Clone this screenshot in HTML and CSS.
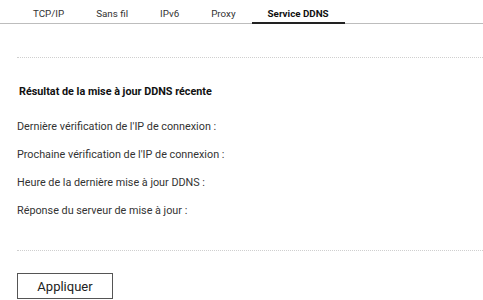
FILE: index.html
```html
<!DOCTYPE html>
<html>
<head>
<title>Service DDNS</title>
<meta charset="utf-8" />
<link rel="stylesheet" href="styles.css">
</head>

<body>

<ul class="tabs">
	<li class="tab">TCP/IP</li>
	<li class="tab">Sans fil</li>
	<li class="tab">IPv6</li>
	<li class="tab">Proxy</li>
	<li class="tab active">Service DDNS</li>
</ul>

<div class="panel">

	<h3 class="title">Résultat de la mise à jour DDNS récente</h3>

	<div class="row">Dernière vérification de l'IP de connexion :</div>
	<div class="row">Prochaine vérification de l'IP de connexion :</div>
	<div class="row">Heure de la dernière mise à jour DDNS :</div>
	<div class="row">Réponse du serveur de mise à jour :</div>

</div>

<p class="actions"><button type="button" class="btn">Appliquer</button></p>

</body>
</html>
```

FILE: styles.css
```css
body {
	margin: 0;
	background: #fff;
	color: #333;
	font: 10.8px Roboto, "Liberation Sans", sans-serif;
}

.tabs {
	display: flex;
	margin: 0;
	padding: 0 0 0 17px;
	list-style: none;
	border-bottom: 1px solid #bdbdbd;
}

.tab {
	padding: 8px 16px 3px;
	line-height: 11px;
	font-size: 9.8px;
	color: #333;
	border-bottom: 2px solid transparent;
	margin-bottom: -1px;
}

.tab.active {
	font-weight: bold;
	color: #111;
	border-bottom-color: #222;
}

.panel {
	margin: 33px 0 0 17px;
	padding: 27px 0 32px;
	border-top: 1px dotted #cfcfcf;
	border-bottom: 1px dotted #cfcfcf;
}

.title {
	margin: 0 0 21px 2px;
	font-size: 10.8px;
	line-height: 14px;
	font-weight: bold;
	color: #111;
}

.row {
	line-height: 14px;
	margin-bottom: 14px;
	color: #333;
}

.row:last-child {
	margin-bottom: 0;
}

.actions {
	margin: 22px 0 0 17px;
}

.btn {
	display: block;
	width: 96px;
	height: 26px;
	padding: 0;
	background: #fff;
	border: 1px solid #555;
	border-radius: 0;
	color: #222;
	font: 13px Roboto, "Liberation Sans", sans-serif;
}
```
